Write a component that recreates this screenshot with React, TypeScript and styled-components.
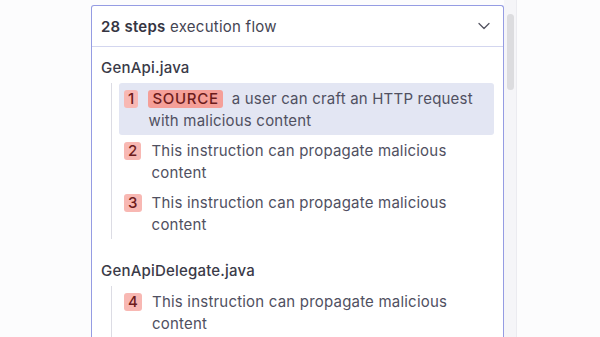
import styled, { createGlobalStyle } from 'styled-components'

const GlobalStyle = createGlobalStyle`
  html, body {
    margin: 0;
    padding: 0;
    height: 100%;
    overflow: hidden;
    background: #fcfcfd;
  }
  body {
    font-family: Inter, 'Noto Sans', sans-serif;
    color: #4a4a5a;
  }
`

const Page = styled.div`
  display: flex;
  height: 337px;
  padding-left: 91px;
`

const Scroller = styled.div`
  width: 413px;
  padding-top: 5px;
  box-sizing: border-box;
`

const Panel = styled.div`
  border: 1px solid #959ce3;
  border-bottom: none;
  border-radius: 3px 3px 0 0;
  background: #fff;
  height: 340px;
  box-sizing: border-box;
`

const Header = styled.div`
  display: flex;
  align-items: center;
  justify-content: space-between;
  height: 40px;
  padding: 0 12px 0 9px;
  border-bottom: 1px solid #d3d6ef;
  font-size: 15px;
  letter-spacing: 0.25px;
  color: #454553;
`

const Count = styled.span`
  font-weight: 600;
  color: #353542;
`

const Body = styled.div`
  padding: 10px 9px 0 9px;
  display: flex;
  flex-direction: column;
  gap: 21px;
`

const Group = styled.div`
  display: flex;
  flex-direction: column;
  gap: 4px;
`

const FileName = styled.div`
  font-size: 15px;
  line-height: 22px;
  font-weight: 500;
  letter-spacing: 0.2px;
  color: #3a3a48;
`

const Steps = styled.div`
  margin-left: 10px;
  border-left: 1px solid #dcdce4;
  padding-left: 7px;
  display: flex;
  flex-direction: column;
`

const Step = styled.div<{ $active?: boolean }>`
  display: flex;
  align-items: flex-start;
  gap: 9px;
  padding: 5px 4px 3px 5px;
  border-radius: 3px;
  background: ${(p) => (p.$active ? '#e3e6f3' : 'transparent')};
  font-size: 15px;
  line-height: 22px;
  letter-spacing: 0.2px;
  color: #505061;
`

const Num = styled.span`
  flex: none;
  margin-top: 2px;
  height: 18px;
  line-height: 18px;
  padding: 0 4px;
  border-radius: 3px;
  background: #f8b8b3;
  color: #6d1c1c;
  font-size: 15px;
  font-weight: 500;
`

const Text = styled.div`
  flex: 1;
  padding-left: 1px;
`

const Tag = styled.span`
  display: inline-block;
  height: 18px;
  line-height: 18px;
  padding: 0 4px;
  margin-right: 9px;
  border-radius: 3px;
  background: #f59f98;
  color: #6d1c1c;
  font-weight: 500;
  letter-spacing: 0.7px;
`

const Track = styled.div`
  width: 13px;
  height: 100%;
  background: #f5f5f8;
  border-right: 1px solid #ebebf0;
  padding: 14px 0 0 3px;
  box-sizing: border-box;
`

const Thumb = styled.div`
  width: 7px;
  height: 76px;
  border-radius: 4px;
  background: #dcdcdf;
`

const Chevron = () => (
  <svg width='14' height='14' viewBox='0 0 14 14' fill='none'>
    <path d='M2 4.5 L7 9.5 L12 4.5' stroke='#555562' strokeWidth='1.3' strokeLinecap='round' strokeLinejoin='round' />
  </svg>
)

const groups = [
  {
    file: 'GenApi.java',
    steps: [
      { n: 1, source: true, text: 'a user can craft an HTTP request with malicious content' },
      { n: 2, text: 'This instruction can propagate malicious content' },
      { n: 3, text: 'This instruction can propagate malicious content' }
    ]
  },
  {
    file: 'GenApiDelegate.java',
    steps: [{ n: 4, text: 'This instruction can propagate malicious content' }]
  }
]

function App() {
  return (
    <>
      <GlobalStyle />
      <Page>
        <Scroller>
          <Panel>
            <Header>
              <span>
                <Count>28 steps</Count> execution flow
              </span>
              <Chevron />
            </Header>
            <Body>
              {groups.map((g) => (
                <Group key={g.file}>
                  <FileName>{g.file}</FileName>
                  <Steps>
                    {g.steps.map((s) => (
                      <Step key={s.n} $active={s.source}>
                        <Num>{s.n}</Num>
                        <Text>
                          {s.source && <Tag>SOURCE</Tag>}
                          {s.text}
                        </Text>
                      </Step>
                    ))}
                  </Steps>
                </Group>
              ))}
            </Body>
          </Panel>
        </Scroller>
        <Track>
          <Thumb />
        </Track>
      </Page>
    </>
  )
}

export default App
